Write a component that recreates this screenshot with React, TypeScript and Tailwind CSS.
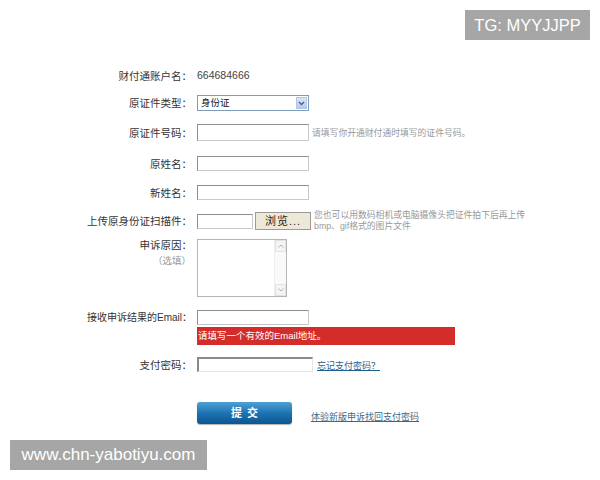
import React from "react";

const font = { fontFamily: '"Liberation Sans", "Noto Sans CJK SC", sans-serif' };

function Label({ children }: { children: React.ReactNode }) {
  return (
    <div className="w-[132px] shrink-0 text-right text-[10.5px] leading-[12px] text-[#333]">
      {children}
    </div>
  );
}

function TextInput({ w, h }: { w: string; h: string }) {
  return (
    <div
      className={`${w} ${h} bg-white border border-t-[#8f8f8f] border-l-[#8f8f8f] border-r-[#c9c9c9] border-b-[#c9c9c9]`}
    />
  );
}

export default function App() {
  return (
    <div className="relative w-[600px] h-[480px] bg-white overflow-hidden" style={font}>
      <div className="flex flex-col pl-[60px] pt-[68px]">
        {/* row 1 */}
        <div className="flex items-center h-[16px]">
          <Label>财付通账户名：</Label>
          <div className="ml-[5px] text-[10.5px] text-[#444]">664684666</div>
        </div>

        {/* row 2 */}
        <div className="flex items-center mt-[11px] h-[16px]">
          <Label>原证件类型：</Label>
          <div className="ml-[5px] w-[112px] h-[16px] flex items-center justify-between border border-[#7f9db9] bg-white pl-[3px] pr-[1px]">
            <span className="text-[9.5px] text-[#111] leading-none">身份证</span>
            <div className="w-[11px] h-[12px] bg-gradient-to-b from-[#dbe5f8] to-[#b7c9ee] border border-[#b4c5ea] flex items-center justify-center">
              <svg width="7" height="5" viewBox="0 0 7 5">
                <path d="M1 1 L3.5 3.5 L6 1" fill="none" stroke="#4d6185" strokeWidth="1.4" />
              </svg>
            </div>
          </div>
        </div>

        {/* row 3 */}
        <div className="flex items-center mt-[13px] h-[17px]">
          <Label>原证件号码：</Label>
          <div className="ml-[5px]">
            <TextInput w="w-[112px]" h="h-[17px]" />
          </div>
          <div className="ml-[3px] text-[8.8px] text-[#999] leading-none pt-[2px]">
            请填写你开通财付通时填写的证件号码。
          </div>
        </div>

        {/* row 4 */}
        <div className="flex items-center mt-[15px] h-[15px]">
          <Label>原姓名：</Label>
          <div className="ml-[5px]">
            <TextInput w="w-[112px]" h="h-[15px]" />
          </div>
        </div>

        {/* row 5 */}
        <div className="flex items-center mt-[14px] h-[15px]">
          <Label>新姓名：</Label>
          <div className="ml-[5px]">
            <TextInput w="w-[112px]" h="h-[15px]" />
          </div>
        </div>

        {/* row 6 */}
        <div className="flex items-center mt-[12px] h-[18px]">
          <Label>上传原身份证扫描件：</Label>
          <div className="ml-[5px]">
            <TextInput w="w-[56px]" h="h-[15px]" />
          </div>
          <div className="ml-[2px] w-[56px] h-[18px] bg-[#ece9d8] border border-[#9a9a9a] flex items-center justify-center text-[11px] text-[#222] tracking-[1px]">
            浏览...
          </div>
          <div className="ml-[3px] w-[216px] text-[8.8px] text-[#999] leading-[11px] overflow-hidden">
            <div className="whitespace-nowrap overflow-hidden">您也可以用数码相机或电脑摄像头把证件拍下后再上传</div>
            <div className="whitespace-nowrap">bmp、gif格式的图片文件</div>
          </div>
        </div>

        {/* row 7 */}
        <div className="flex items-start mt-[9px] h-[58px]">
          <div className="w-[132px] shrink-0 flex flex-col items-end">
            <div className="text-[10.5px] leading-[12px] text-[#333]">申诉原因：</div>
            <div className="mt-[4px] mr-[1px] text-[9.5px] leading-[12px] text-[#999]">（选填）</div>
          </div>
          <div className="ml-[5px] w-[90px] h-[58px] border border-[#b5b5b5] bg-white flex justify-end">
            <div className="w-[12px] h-full bg-[#fafafa] border-l border-[#eeeeee] flex flex-col justify-between">
              <div className="h-[12px] flex items-center justify-center border border-[#e2e2e2] bg-[#f4f4f4]">
                <svg width="6" height="4" viewBox="0 0 6 4">
                  <path d="M0.5 3.5 L3 1 L5.5 3.5" fill="none" stroke="#b0b0b0" strokeWidth="1" />
                </svg>
              </div>
              <div className="h-[12px] flex items-center justify-center border border-[#e2e2e2] bg-[#f4f4f4]">
                <svg width="6" height="4" viewBox="0 0 6 4">
                  <path d="M0.5 0.5 L3 3 L5.5 0.5" fill="none" stroke="#b0b0b0" strokeWidth="1" />
                </svg>
              </div>
            </div>
          </div>
        </div>

        {/* row 8 */}
        <div className="flex items-center mt-[13px] h-[15px]">
          <div className="w-[132px] shrink-0 text-right text-[10px] leading-[12px] text-[#333]">
            接收申诉结果的Email：
          </div>
          <div className="ml-[5px]">
            <TextInput w="w-[112px]" h="h-[15px]" />
          </div>
        </div>
        <div className="flex mt-[2px]">
          <div className="w-[137px] shrink-0" />
          <div className="w-[258px] h-[18px] bg-[#d42b2b] flex items-center pl-[1px] text-[9.5px] text-white leading-none">
            请填写一个有效的Email地址。
          </div>
        </div>

        {/* row 9 */}
        <div className="flex items-center mt-[12px] h-[15px]">
          <Label>支付密码：</Label>
          <div className="ml-[5px] w-[116px] h-[15px] bg-white border-t-2 border-l-2 border-t-[#8a8a8a] border-l-[#8a8a8a] border-r border-b border-r-[#e5e5e5] border-b-[#e5e5e5]" />
          <a className="ml-[4px] mt-[4px] text-[9px] text-[#1f5f8b] underline leading-none">忘记支付密码？</a>
        </div>

        {/* row 10 */}
        <div className="flex items-center mt-[30px] h-[22px]">
          <div className="w-[137px] shrink-0" />
          <div className="w-[95px] h-[22px] rounded-[3px] bg-gradient-to-b from-[#4ea0d4] via-[#1d74b3] to-[#0d5590] shadow-[0_1px_1px_rgba(0,0,0,0.3)] flex items-center justify-center text-[11px] font-bold text-white tracking-[5px] pl-[5px]">
            提交
          </div>
          <a className="ml-[19px] mt-[8px] text-[9px] text-[#3a6a88] underline leading-none">体验新版申诉找回支付密码</a>
        </div>
      </div>

      {/* watermark overlays */}
      <div className="absolute left-[465px] top-[10px] w-[125px] h-[30px] bg-[#a6a6a6] flex items-center justify-center text-white text-[16.5px]">
        TG: MYYJJPP
      </div>
      <div className="absolute left-[10px] top-[440px] w-[197px] h-[30px] bg-[#a6a6a6] flex items-center justify-center text-white text-[17px]">
        www.chn-yabotiyu.com
      </div>
    </div>
  );
}
